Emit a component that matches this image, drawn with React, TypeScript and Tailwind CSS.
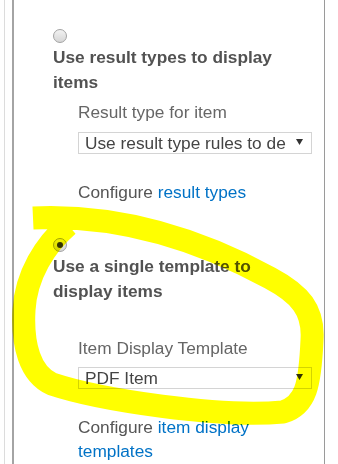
import React from "react";

function Radio({ checked }: { checked?: boolean }) {
  return (
    <div className="w-[14px] h-[14px] rounded-full border border-[#a3a3a3] bg-gradient-to-b from-[#f2f2f2] to-[#d6d6d6] flex items-center justify-center">
      {checked && <div className="w-[6px] h-[6px] rounded-full bg-[#333333]" />}
    </div>
  );
}

function Select({ text }: { text: string }) {
  return (
    <div className="w-[234px] h-[22px] border border-[#d4d4d4] bg-white flex items-center pl-[6px] pr-[8px]">
      <span className="w-[204px] overflow-hidden whitespace-nowrap text-[#444444] leading-[20px]">{text}</span>
      <svg className="ml-auto -mt-[3px]" width="7" height="6" viewBox="0 0 7 6">
        <polygon points="0,0 7,0 3.5,6" fill="#333333" />
      </svg>
    </div>
  );
}

export default function App() {
  return (
    <div className="w-[338px] h-[464px] bg-white relative overflow-hidden flex font-['Liberation_Sans',Arial,sans-serif] text-[17.3px]">
      <div className="w-px h-full ml-[4px] bg-[#dcdcdc]" />
      <div className="w-[313px] h-full ml-[7px] border-l-2 border-r border-l-[#a4a4a4] border-r-[#9a9a9a] pl-[39px] pr-[12px] pt-[29px]">
        {/* Block 1 */}
        <Radio />
        <div className="mt-[2px] w-[240px] font-bold leading-[25px] text-[#525252]">
          Use result types to display items
        </div>
        <div className="ml-[25px]">
          <div className="mt-[5px] leading-[25px] text-[#666666]">Result type for item</div>
          <div className="mt-[7px]">
            <Select text="Use result type rules to de" />
          </div>
          <div className="mt-[26px] leading-[25px] text-[#555555]">
            Configure <span className="text-[#0072c6]">result types</span>
          </div>
        </div>

        {/* Block 2 */}
        <div className="mt-[33px]">
          <Radio checked />
        </div>
        <div className="mt-[2px] w-[240px] font-bold leading-[25px] text-[#525252]">
          Use a single template to display items
        </div>
        <div className="ml-[25px]">
          <div className="mt-[32px] leading-[25px] text-[#666666]">Item Display Template</div>
          <div className="mt-[6px]">
            <Select text="PDF Item" />
          </div>
          <div className="mt-[26px] leading-[24px] text-[#555555]">
            <div>
              Configure <span className="text-[#0072c6]">item display</span>
            </div>
            <div className="text-[#0072c6]">templates</div>
          </div>
        </div>
      </div>

      <svg
        className="absolute inset-0 pointer-events-none mix-blend-multiply"
        width="338"
        height="464"
        viewBox="0 0 338 464"
      >
        <path
          d="M 33 218 C 120 214, 200 240, 270 278 C 300 294, 314 310, 312 340 C 310 385, 306 405, 283 412 C 220 418, 100 400, 52 384 C 30 374, 22 345, 24 310 C 26 275, 45 245, 68 225"
          fill="none"
          stroke="#ffff00"
          strokeWidth="23"
          strokeLinecap="butt"
          strokeLinejoin="round"
        />
      </svg>
    </div>
  );
}
